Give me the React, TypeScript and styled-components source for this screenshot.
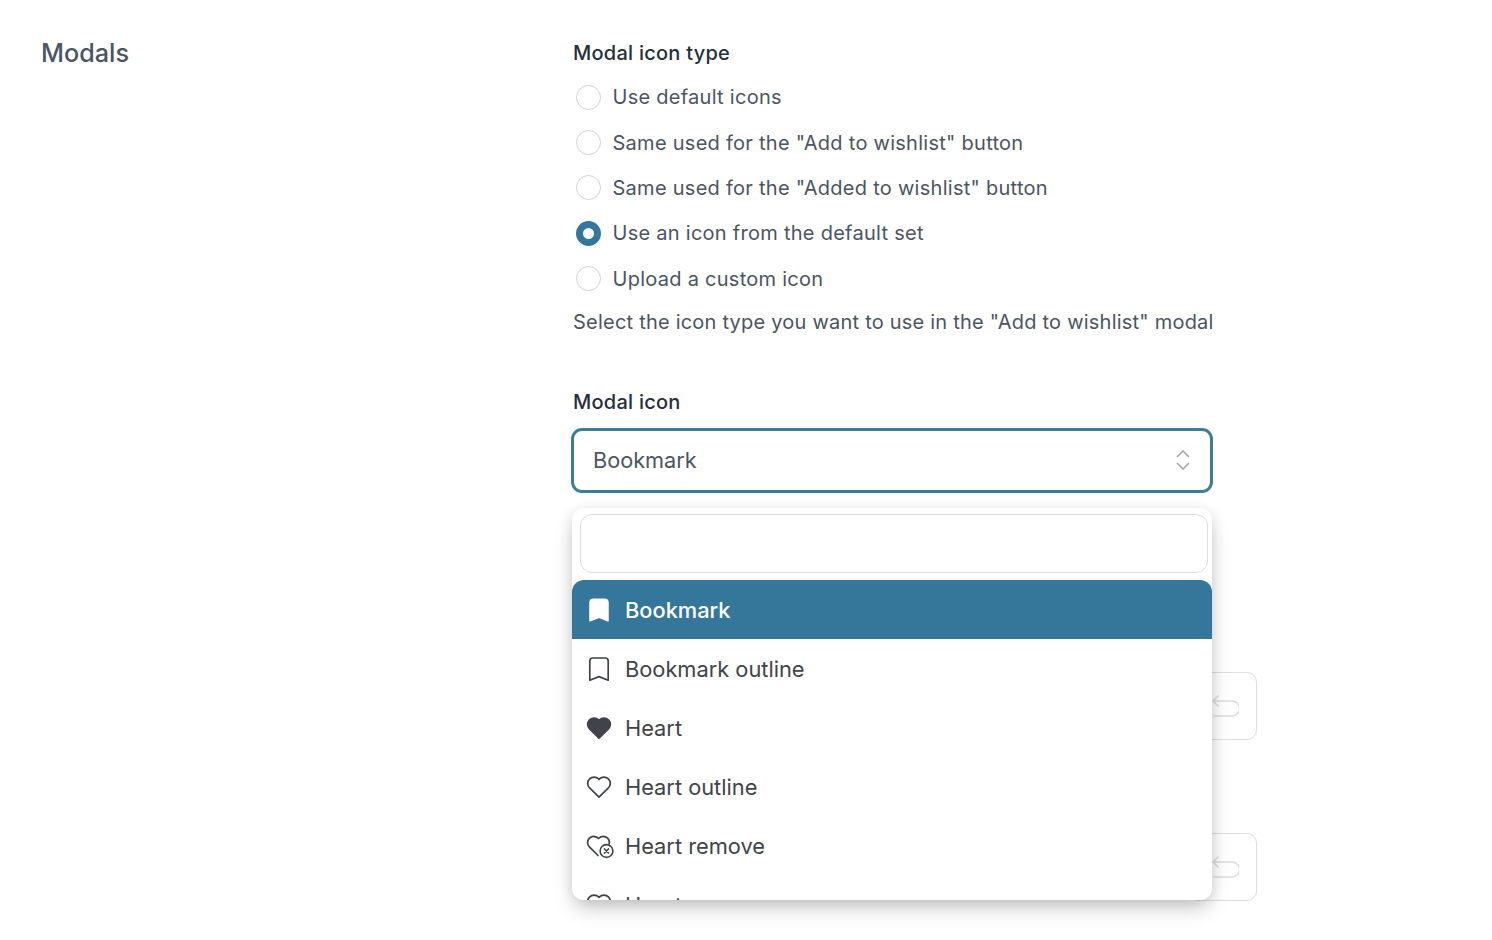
import React from "react";
import styled, { createGlobalStyle } from "styled-components";

const GlobalStyle = createGlobalStyle`
  html, body {
    margin: 0;
    padding: 0;
    background: #fff;
    font-family: Inter, "Liberation Sans", sans-serif;
  }
`;

const Page = styled.div`
  display: grid;
  grid-template-columns: 530px 642px;
  padding: 39px 0 0 41px;
  height: 901px;
  width: 1451px;
  overflow: hidden;
`;

const SectionTitle = styled.h2`
  margin: 0;
  font-size: 25.2px;
  line-height: 28px;
  font-weight: 500;
  color: #4b5563;
`;

const Form = styled.div`
  display: flex;
  flex-direction: column;
  width: 642px;
`;

const Label = styled.div<{ $top?: number }>`
  font-size: 20px;
  line-height: 28px;
  font-weight: 500;
  letter-spacing: 0.25px;
  color: #252f3d;
  padding-left: 2px;
  margin-top: ${(p) => p.$top ?? 0}px;
`;

const RadioGroup = styled.div`
  display: flex;
  flex-direction: column;
  margin-top: 7.5px;
`;

const RadioRow = styled.label`
  display: flex;
  align-items: center;
  gap: 11.5px;
  height: 45.4px;
  padding-left: 5px;
  font-size: 20px;
  letter-spacing: 0.27px;
  color: #4b5563;
`;

const RadioDot = styled.span<{ $checked?: boolean }>`
  box-sizing: border-box;
  width: 25px;
  height: 25px;
  border-radius: 50%;
  background: #fff;
  border: ${(p) => (p.$checked ? "7.5px solid #35779b" : "1px solid #d0d3d8")};
`;

const Help = styled.div`
  margin-top: 6px;
  padding-left: 2px;
  font-size: 20px;
  line-height: 30px;
  letter-spacing: 0.22px;
  color: #4b5563;
  white-space: nowrap;
`;

const SelectWrap = styled.div`
  position: relative;
  margin-top: 12px;
`;

const SelectBox = styled.div`
  box-sizing: border-box;
  display: flex;
  align-items: center;
  justify-content: space-between;
  height: 65px;
  padding: 0 19px 2px 19px;
  border: 3px solid #3f7c9b;
  border-radius: 11px;
  background: #fff;
  font-size: 21.7px;
  color: #4b5563;
`;

const Popover = styled.div`
  position: absolute;
  z-index: 2;
  top: 80px;
  left: 1px;
  width: 640px;
  height: 392px;
  display: flex;
  flex-direction: column;
  overflow: hidden;
  background: #fff;
  border-radius: 12px;
  box-shadow: 0 10px 22px -4px rgba(0, 0, 0, 0.24), 0 2px 14px rgba(0, 0, 0, 0.09);
`;

const SearchBox = styled.div`
  box-sizing: border-box;
  flex: none;
  height: 59px;
  margin: 6px 4px 7px 8px;
  border: 1px solid #dcdcdc;
  border-radius: 12px;
`;

const OptionList = styled.div`
  display: flex;
  flex-direction: column;
`;

const Option = styled.div<{ $active?: boolean }>`
  flex: none;
  display: flex;
  align-items: center;
  gap: 13px;
  height: 59px;
  padding-left: 14px;
  font-size: 21.8px;
  font-weight: ${(p) => (p.$active ? 500 : 400)};
  color: ${(p) => (p.$active ? "#fff" : "#3f444b")};
  background: ${(p) => (p.$active ? "#35779b" : "#fff")};
  border-radius: ${(p) => (p.$active ? "12px 12px 0 0" : "0")};
`;

const OptionIcon = styled.svg`
  flex: none;
  width: 26px;
  height: 26px;
`;

const ValueRow = styled.div<{ $top: number }>`
  display: flex;
  justify-content: flex-end;
  width: 686px;
  margin-top: ${(p) => p.$top}px;
`;

const ResetButton = styled.button`
  box-sizing: border-box;
  display: flex;
  align-items: center;
  justify-content: center;
  width: 68px;
  height: 68px;
  padding: 0;
  background: #fff;
  border: 1px solid #dedede;
  border-radius: 10px;
`;

function SelectorIcon() {
  return (
    <svg width="16" height="22" viewBox="0 0 16 22" fill="none" stroke="#a3a8b0" strokeWidth="1.7" strokeLinecap="round" strokeLinejoin="round">
      <path d="M2.5 7.5 8 2 13.5 7.5" />
      <path d="M2.5 14.5 8 20 13.5 14.5" />
    </svg>
  );
}

function BookmarkIcon({ filled }: { filled?: boolean }) {
  return (
    <OptionIcon viewBox="0 0 26 26">
      <path
        d="M3.8 24.2V5a3 3 0 0 1 3-3h12.4a3 3 0 0 1 3 3v19.2L13 20.6z"
        fill={filled ? "#fff" : "none"}
        stroke={filled ? "#fff" : "#3f444b"}
        strokeWidth={filled ? 1 : 1.7}
        strokeLinejoin="round"
      />
    </OptionIcon>
  );
}

const heartPath = "M13 23.2 3.6 13.9a6.3 6.3 0 0 1 0-9 6.4 6.4 0 0 1 9 0l.4.5.4-.5a6.4 6.4 0 0 1 9 0 6.3 6.3 0 0 1 0 9z";

function HeartIcon({ filled }: { filled?: boolean }) {
  return (
    <OptionIcon viewBox="0 0 26 26">
      <path d={heartPath} fill={filled ? "#3f444b" : "none"} stroke="#3f444b" strokeWidth="1.7" strokeLinejoin="round" />
    </OptionIcon>
  );
}

const RemoveIcon = styled(OptionIcon)`
  width: 28px;
  margin-right: -2px;
`;

function HeartRemoveIcon() {
  return (
    <RemoveIcon viewBox="0 0 28 26">
      <path
        d="M12 22.5 3.4 13.8a6.1 6.1 0 0 1 0-8.7 6.2 6.2 0 0 1 8.7 0l.4.4.4-.4a6.2 6.2 0 0 1 8.7 0 6.1 6.1 0 0 1 1.6 5.8"
        fill="none"
        stroke="#3f444b"
        strokeWidth="1.7"
        strokeLinecap="round"
        strokeLinejoin="round"
      />
      <circle cx="20.5" cy="18" r="6.4" fill="#fff" stroke="#3f444b" strokeWidth="1.6" />
      <path d="m18.5 16 4 4m0-4-4 4" stroke="#3f444b" strokeWidth="1.7" strokeLinecap="round" />
    </RemoveIcon>
  );
}

function UndoIcon() {
  return (
    <svg width="32" height="24" viewBox="0 0 32 24" fill="none" stroke="#dcdcdc" strokeWidth="1.6" strokeLinecap="round" strokeLinejoin="round">
      <path d="M6 7h19a5.5 5.5 0 0 1 0 15H7" />
      <path d="M11 2 6 7l5 5" />
    </svg>
  );
}

const radios = [
  'Use default icons',
  'Same used for the "Add to wishlist" button',
  'Same used for the "Added to wishlist" button',
  'Use an icon from the default set',
  'Upload a custom icon',
];

export default function App() {
  return (
    <>
      <GlobalStyle />
      <Page>
        <SectionTitle>Modals</SectionTitle>
        <Form>
          <Label>Modal icon type</Label>
          <RadioGroup>
            {radios.map((text, i) => (
              <RadioRow key={text}>
                <RadioDot $checked={i === 3} />
                {text}
              </RadioRow>
            ))}
          </RadioGroup>
          <Help>Select the icon type you want to use in the "Add to wishlist" modal</Help>
          <Label $top={51}>Modal icon</Label>
          <SelectWrap>
            <SelectBox>
              Bookmark
              <SelectorIcon />
            </SelectBox>
            <Popover>
              <SearchBox />
              <OptionList>
                <Option $active>
                  <BookmarkIcon filled />
                  Bookmark
                </Option>
                <Option>
                  <BookmarkIcon />
                  Bookmark outline
                </Option>
                <Option>
                  <HeartIcon filled />
                  Heart
                </Option>
                <Option>
                  <HeartIcon />
                  Heart outline
                </Option>
                <Option>
                  <HeartRemoveIcon />
                  Heart remove
                </Option>
                <Option>
                  <HeartIcon />
                  Heart
                </Option>
              </OptionList>
            </Popover>
          </SelectWrap>
          <ValueRow $top={179}>
            <ResetButton>
              <UndoIcon />
            </ResetButton>
          </ValueRow>
          <ValueRow $top={93}>
            <ResetButton>
              <UndoIcon />
            </ResetButton>
          </ValueRow>
        </Form>
      </Page>
    </>
  );
}
